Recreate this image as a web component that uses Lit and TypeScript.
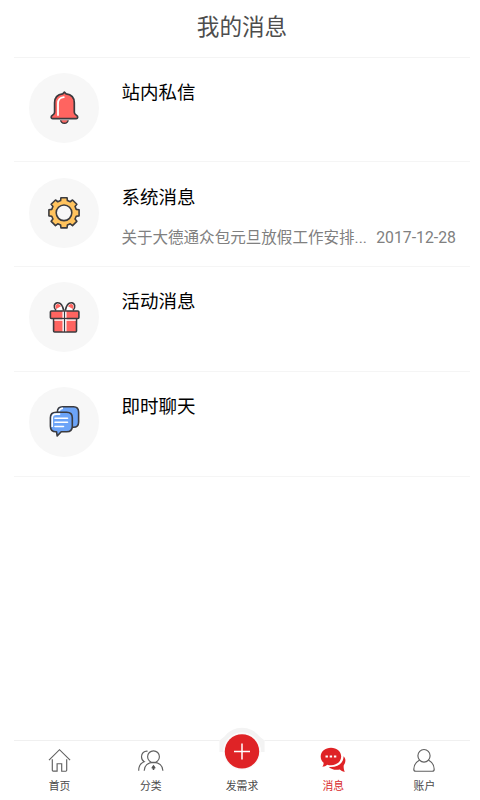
import { LitElement, html, svg, css } from "lit";
import { customElement, property } from "lit/decorators.js";
import { classMap } from "lit/directives/class-map.js";

const gearPath = (() => {
  const points: string[] = [];
  for (let i = 0; i < 8; i++) {
    const a = (i * Math.PI) / 4;
    const steps: [number, number][] = [[-0.27, 12.7], [-0.2, 15.4], [0.2, 15.4], [0.27, 12.7]];
    for (const [d, r] of steps) {
      points.push(`${(35 + r * Math.sin(a + d)).toFixed(2)} ${(34.8 - r * Math.cos(a + d)).toFixed(2)}`);
    }
  }
  return `M${points.join("L")}Z`;
})();

const rowIcons: Record<string, unknown> = {
  bell: svg`
    <path d="M31.6 46.4a3.8 3.9 0 0 0 7.6 0z" fill="#ff6460" stroke="#3b3b3f" stroke-width="1.5"/>
    <path d="M30.5 46h9.6v1.3h-9.6z" fill="#f7f7f7"/>
    <path d="M35.4 19.2l1.7 1.6c5 .5 8.2 3.8 8.2 9v9.5c0 1.5.9 2.4 2.1 3 2 1 1.5 3.3-.2 3.3H23.7c-1.8 0-2.2-2.3-.2-3.3 1.2-.6 2.1-1.5 2.1-3v-9.5c0-5.2 3.1-8.5 8.1-9z" fill="#ff6460" stroke="#3b3b3f" stroke-width="1.7" stroke-linejoin="round"/>
    <path d="M29 42V30.5q0-5.7 5.8-6.3" fill="none" stroke="#fff" stroke-width="1.8" stroke-linecap="round"/>`,
  gear: svg`
    <path d=${gearPath} fill="#ffc35e" stroke="#3b3b3f" stroke-width="1.6" stroke-linejoin="round"/>
    <circle cx="35" cy="34.8" r="7.8" fill="#f7f7f7" stroke="#3b3b3f" stroke-width="1.6"/>`,
  gift: svg`
    <path d="M34.7 28.5c-1-4.8-3-7.9-6.2-7.7-3.5.3-4.5 4.6-1.4 7.7M36.3 28.5c1-4.8 3-7.9 6.2-7.7 3.5.3 4.5 4.6 1.4 7.7" fill="#fff" stroke="#3b3b3f" stroke-width="1.6"/>
    <path d="M27.2 27c-1.3-2.1-.8-4.6 1.3-5 1.5-.2 2.6.8 3.5 2.2zM43.8 27c1.3-2.1.8-4.6-1.3-5-1.5-.2-2.6.8-3.5 2.2z" fill="#ff6460"/>
    <rect x="24.6" y="36" width="22.9" height="14" rx="1" fill="#ff6460" stroke="#3b3b3f" stroke-width="1.6"/>
    <path d="M25.3 38h21.5" stroke="#fff" stroke-width="1.6"/>
    <rect x="21.4" y="29" width="28.5" height="7.5" rx="1" fill="#ff6460" stroke="#3b3b3f" stroke-width="1.6"/>
    <path d="M35.5 29.8v6M35.5 37.3v12" stroke="#fff" stroke-width="4"/>
    <path d="M35.5 29v21" stroke="#3b3b3f" stroke-width="1.2"/>`,
  chat: svg`
    <path d="M33.5 19.7h11c3.4 0 5.1 1.9 5.1 5.3v10c0 3.5-1.7 5.3-5.1 5.3h-11c-3.4 0-5.1-1.8-5.1-5.3V25c0-3.4 1.7-5.3 5.1-5.3z" fill="#6ca4f8" stroke="#3b3b3f" stroke-width="1.6"/>
    <path d="M30 24.5q.5-3.2 4-3.2" fill="none" stroke="#fff" stroke-width="1.6"/>
    <path d="M27 25.2h10.7c3.7 0 5.6 1.9 5.6 5.5v8.5c0 3.7-1.9 5.5-5.6 5.5h-5.500l-4 4.300-.7-4.300H27c-3.700 0-5.600-1.800-5.600-5.500v-8.500c0-3.600 1.900-5.500 5.600-5.500z" fill="#6ca4f8" stroke="#3b3b3f" stroke-width="1.6" stroke-linejoin="round"/>
    <path d="M23.2 40v-9q0-3.900 4-3.900h4" fill="none" stroke="#fff" stroke-width="1.6"/>
    <path d="M26 31.3h12.500M26 35.300h12.500M26 39.500h8.500" stroke="#fff" stroke-width="1.6" stroke-linecap="round"/>`,
};

const tabIcons: Record<string, unknown> = {
  home: svg`<path d="M-11 19.2L-.5 8.7 10.1 19.2M-7.7 18.2V29.3q0 .9.9.9H-2.9V22.700H1.700v7.500H5.800q.9 0 .9-.9V18.200" class="line"/>`,
  users: svg`
    <circle cx="2.5" cy="15.7" r="5.9" class="line"/>
    <path d="M-6.8 29.7c0-5 3.700-8.300 9.300-8.300s9.400 3.300 9.400 8.300M-3.400 10.200c-3.600-.3-6.100 2-6.100 5.600 0 2.300 1 3.900 2.700 4.900-3.600 1.200-5.500 4.500-5.500 9" class="line"/>
    <path d="M2.5 23.8l2 2.600q0 1.500-1.500 1.200l.4 1.500H1.600l.4-1.500q-1.500.3-1.500-1.200z" fill="#555"/>`,
  add: svg`
    <path d="M-22.6 11V-.5L-18-3.500A22.600 21 0 0 1 18-3.500L22.600-.5V29H-22.600z" fill="#fff"/>
    <path d="M-22.6 11V-.5L-17.500-4.500A22 22 0 0 1 17.500-4.500L22.600-.5V11H19A19 19.500 0 0 0-19 11z" fill="#f3f3f3"/>
    <circle cy="10.4" r="18.5" fill="#fafafa"/>
    <circle cy="10.4" r="17.2" fill="#df2326"/>
    <path d="M-8 10.500H8M0 2.500v16" stroke="#fff" stroke-width="1.5"/>`,
  message: svg`
    <path d="M10.600 15.200c2.200 2 2.500 5.900.3 8.700-.5.700-.3 4.500.8 7-2.200-.5-3.700-1-4.900-2.300-5.200.7-8.300-.2-11-2.600 8.200.8 14.700-3.300 14.800-10.800z" fill="#df2326"/>
    <path d="M-2 6.800c5.800 0 10.200 3.700 10.200 8.700S3.800 24.200-2 24.200c-1.400 0-2.500-.1-3.700-.5-1.400 1.300-3 2-5 2 1-1.100 1.400-2.200 1.300-3.900-1.900-1.600-2.900-3.800-2.900-6.300 0-5 4.500-8.700 10.300-8.700z" fill="#df2326"/>
    <path d="M-7.500 15.500h2.400M-3.300 15.500h2.400M.9 15.500h2.400" stroke="#fff" stroke-width="2.200"/>`,
  account: svg`
    <ellipse cy="14.8" rx="6.1" ry="6.3" class="line"/>
    <path d="M-4.700 19.200c-3.400 2-5.500 5.200-5.500 9 0 1.400.6 2 1.900 2H8.300c1.300 0 1.900-.6 1.900-2 0-3.800-2.100-7-5.500-9" class="line"/>`,
};

interface Message { icon: string; title: string; text?: string; date?: string }
const messages: Message[] = [
  { icon: "bell", title: "站内私信" },
  { icon: "gear", title: "系统消息", text: "关于大德通众包元旦放假工作安排...", date: "2017-12-28" },
  { icon: "gift", title: "活动消息" },
  { icon: "chat", title: "即时聊天" },
];

const tabs = [
  { icon: "home", label: "首页" },
  { icon: "users", label: "分类" },
  { icon: "add", label: "发需求" },
  { icon: "message", label: "消息", active: true },
  { icon: "account", label: "账户" },
];

@customElement("message-row")
class MessageRow extends LitElement {
  @property({ attribute: false }) message!: Message;

  static styles = css`
    :host { display: flex; box-sizing: border-box; height: 104.7px; padding: 15.1px 14px 0 15px; border-bottom: 1px solid #f5f5f5; }
    .icon { flex: none; width: 70px; height: 70px; border-radius: 50%; background: #f7f7f7; }
    .body { flex: 1; min-width: 0; margin-left: 22.4px; padding-top: 6.1px; }
    .title { font-size: 18.5px; line-height: 28px; color: #000; }
    .detail { display: flex; justify-content: space-between; margin-top: 14px; font-size: 15.55px; line-height: 24px; color: #808080; white-space: nowrap; }
    .date { font-size: 15.8px; }
  `;

  render() {
    const m = this.message;
    return html`
      <svg class="icon" viewBox="0 0 70 70">${rowIcons[m.icon]}</svg>
      <div class="body">
        <div class="title">${m.title}</div>
        ${m.text ? html`<div class="detail"><span>${m.text}</span><span class="date">${m.date}</span></div>` : ""}
      </div>`;
  }
}

@customElement("app-root")
class AppRoot extends LitElement {
  static styles = css`
    :host { display: flex; flex-direction: column; box-sizing: border-box; width: 480px; height: 800px; padding: 0 10px 0 14px; background: #fff; font-family: Roboto, "Noto Sans CJK SC", sans-serif; overflow: hidden; }
    .header { box-sizing: border-box; height: 57.8px; padding-top: 10px; border-bottom: 1px solid #f4f4f4; text-align: center; font-size: 22.6px; line-height: 36px; color: #4d4d4d; }
    .list { flex: 1; }
    .tabs { display: flex; height: 59.5px; border-top: 1px solid #f0f0f0; }
    .tab { flex: 1; display: flex; flex-direction: column; align-items: center; font-size: 10.8px; line-height: 19px; color: #4a4a4a; }
    .tab.active { color: #d9292c; }
    .glyph { flex: none; width: 48px; height: 36px; overflow: visible; }
    .line { fill: none; stroke: #606060; stroke-width: 1.15; }
  `;

  render() {
    return html`
      <div class="header">我的消息</div>
      <div class="list">${messages.map((m) => html`<message-row .message=${m}></message-row>`)}</div>
      <div class="tabs">
        ${tabs.map((t) => html`
          <div class=${classMap({ tab: true, active: !!t.active })}>
            <svg class="glyph" viewBox="-24 0 48 36">${tabIcons[t.icon]}</svg>
            <span>${t.label}</span>
          </div>`)}
      </div>`;
  }
}
